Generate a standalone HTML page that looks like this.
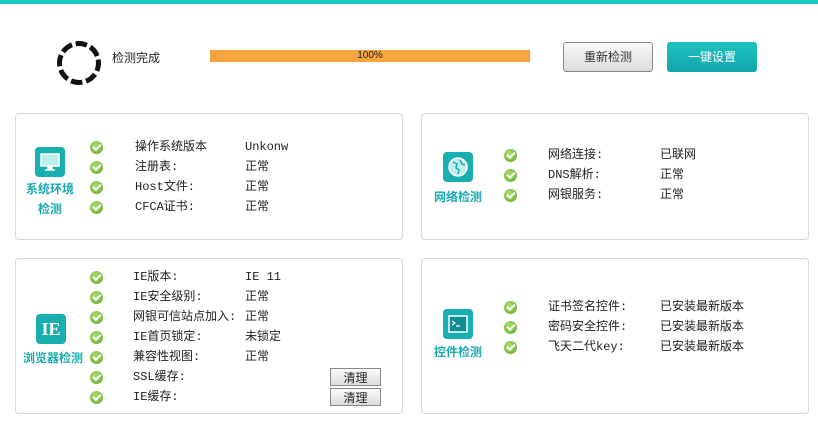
<!DOCTYPE html>
<html><head><meta charset="utf-8"><style>
*{margin:0;padding:0;box-sizing:border-box}
body{width:818px;height:422px;background:#fff;position:relative;overflow:hidden;font-family:"Liberation Mono","Noto Sans CJK SC",monospace;font-size:12px;color:#222}
.a{position:absolute;white-space:nowrap}
.panel{position:absolute;border:1px solid #d9d9d9;border-radius:4px;background:#fff}
.ic{position:absolute;width:30px;height:30px;background:#19aeb0;border-radius:4px}
.lbl{position:absolute;color:#17aab0;font-family:"Liberation Sans","Noto Sans CJK SC",sans-serif;font-size:12px;font-weight:bold;text-align:center;line-height:20px}
.ck{position:absolute;width:13px;height:13px;border-radius:50%;background:radial-gradient(circle at 40% 35%,#a8dd6a,#5fa92e);}
.ck:after{content:"";position:absolute;left:3px;top:3px;width:6px;height:3px;border-left:2px solid #fff;border-bottom:2px solid #fff;transform:rotate(-45deg)}
.btn{position:absolute;border:1px solid #888;background:linear-gradient(#fafafa,#dcdcdc);text-align:center;font-family:"Liberation Sans","Noto Sans CJK SC",sans-serif}
</style></head><body>
<div class="a" style="left:0;top:0;width:818px;height:4px;background:#1cc6c0"></div>
<svg class="a" style="left:56px;top:40px" width="46" height="46" viewBox="0 0 46 46"><circle cx="23" cy="23" r="19.5" fill="none" stroke="#111" stroke-width="5" stroke-dasharray="11.5 3.8" transform="rotate(-10 23 23)"/></svg>
<div class="a" style="left:112px;top:49px;font-family:'Liberation Sans','Noto Sans CJK SC',sans-serif;">检测完成</div>
<div class="a" style="left:210px;top:50px;width:320px;height:12px;background:#f9a33e;font-size:10px;line-height:12px;text-align:center;font-family:'Liberation Sans',sans-serif">100%</div>
<div class="btn" style="left:563px;top:42px;width:90px;height:30px;line-height:28px;border-radius:3px;color:#333">重新检测</div>
<div class="a" style="left:667px;top:42px;width:90px;height:30px;line-height:30px;border-radius:3px;background:linear-gradient(#1fc2c0,#12a7ac);color:#fff;text-align:center;font-family:'Liberation Sans','Noto Sans CJK SC',sans-serif">一键设置</div>

<div class="panel" style="left:15px;top:113px;width:388px;height:127px"></div>
<div class="panel" style="left:421px;top:113px;width:388px;height:127px"></div>
<div class="panel" style="left:15px;top:258px;width:388px;height:156px"></div>
<div class="panel" style="left:421px;top:258px;width:388px;height:156px"></div>

<div class="ic" style="left:35px;top:147px"><svg width="30" height="30"><rect x="6" y="7" width="18" height="12" fill="#bfeeee" stroke="#fff" stroke-width="1.5"/><path d="M13 20h4v3h-4zM10 23h10" stroke="#fff" stroke-width="1.5" fill="#fff"/></svg></div>
<div class="lbl" style="left:20px;top:179px;width:60px">系统环境<br>检测</div>
<div class="ck" style="left:90px;top:141px"></div><div class="ck" style="left:90px;top:161px"></div><div class="ck" style="left:90px;top:181px"></div><div class="ck" style="left:90px;top:201px"></div>
<div class="a" style="left:135px;top:137px;line-height:20px">操作系统版本<br>注册表:<br>Host文件:<br>CFCA证书:</div>
<div class="a" style="left:245px;top:137px;line-height:20px">Unkonw<br>正常<br>正常<br>正常</div>

<div class="ic" style="left:443px;top:152px"><svg width="30" height="30"><circle cx="15" cy="15" r="9" fill="#bfeeee" stroke="#fff" stroke-width="1.5"/><path d="M10 10l4 2-1 4 3 2-1 4M17 8l2 4 3 1" stroke="#19aeb0" stroke-width="1.5" fill="none"/></svg></div>
<div class="lbl" style="left:428px;top:187px;width:60px">网络检测</div>
<div class="ck" style="left:504px;top:149px"></div><div class="ck" style="left:504px;top:169px"></div><div class="ck" style="left:504px;top:189px"></div>
<div class="a" style="left:548px;top:145px;line-height:20px">网络连接:<br>DNS解析:<br>网银服务:</div>
<div class="a" style="left:660px;top:145px;line-height:20px">已联网<br>正常<br>正常</div>

<div class="ic" style="left:36px;top:314px;color:#fff;font:bold 18px 'Liberation Serif',serif;line-height:30px;text-align:center">IE</div>
<div class="lbl" style="left:17px;top:348px;width:72px">浏览器检测</div>
<div class="ck" style="left:90px;top:271px"></div><div class="ck" style="left:90px;top:291px"></div><div class="ck" style="left:90px;top:311px"></div><div class="ck" style="left:90px;top:331px"></div><div class="ck" style="left:90px;top:351px"></div><div class="ck" style="left:90px;top:371px"></div><div class="ck" style="left:90px;top:391px"></div>
<div class="a" style="left:133px;top:267px;line-height:20px">IE版本:<br>IE安全级别:<br>网银可信站点加入:<br>IE首页锁定:<br>兼容性视图:<br>SSL缓存:<br>IE缓存:</div>
<div class="a" style="left:245px;top:267px;line-height:20px">IE 11<br>正常<br>正常<br>未锁定<br>正常</div>
<div class="btn" style="left:330px;top:368px;width:51px;height:18px;line-height:18px">清理</div>
<div class="btn" style="left:330px;top:388px;width:51px;height:18px;line-height:18px">清理</div>

<div class="ic" style="left:443px;top:309px"><svg width="30" height="30"><rect x="6" y="7" width="18" height="16" fill="#0f8f93" stroke="#fff" stroke-width="1.5"/><path d="M9 12l3 2-3 2M13 17h4" stroke="#fff" stroke-width="1.2" fill="none"/></svg></div>
<div class="lbl" style="left:428px;top:342px;width:60px">控件检测</div>
<div class="ck" style="left:504px;top:301px"></div><div class="ck" style="left:504px;top:321px"></div><div class="ck" style="left:504px;top:341px"></div>
<div class="a" style="left:548px;top:297px;line-height:20px">证书签名控件:<br>密码安全控件:<br>飞天二代key:</div>
<div class="a" style="left:660px;top:297px;line-height:20px">已安装最新版本<br>已安装最新版本<br>已安装最新版本</div>
</body></html>
